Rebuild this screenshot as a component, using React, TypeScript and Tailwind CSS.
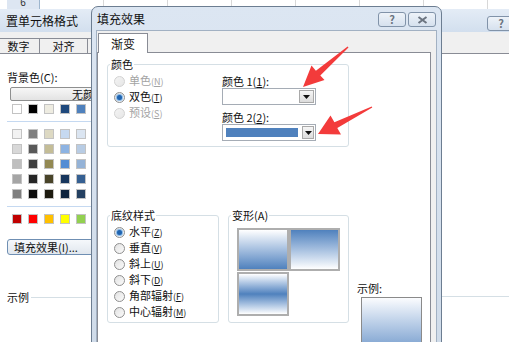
import React from "react";

function Radio({ checked = false, disabled = false }: { checked?: boolean; disabled?: boolean }) {
  return (
    <span
      className={
        "flex h-[11px] w-[11px] shrink-0 items-center justify-center rounded-full border " +
        (disabled
          ? "border-[#d2d2d2] bg-linear-to-br from-[#f4f4f4] to-[#e6e6e6]"
          : "border-[#8f8f8f] bg-linear-to-br from-[#e2e2e2] to-[#fbfbfb]")
      }
    >
      {checked && <span className="h-[5px] w-[5px] rounded-full bg-[#1f64b0] shadow-[0_0_1px_1px_#7fb3e6]" />}
    </span>
  );
}

function RadioItem({
  label,
  hot,
  checked,
  disabled,
}: {
  label: string;
  hot: string;
  checked?: boolean;
  disabled?: boolean;
}) {
  return (
    <div className={"flex h-[16px] items-center gap-[4px] " + (disabled ? "text-[#a3a3a3]" : "text-[#111]")}>
      <Radio checked={checked} disabled={disabled} />
      <span>
        {label}
        <span className="text-[9px]">
          (<span className="underline">{hot}</span>)
        </span>
      </span>
    </div>
  );
}

function Group({ title, className, children }: { title: string; className: string; children: React.ReactNode }) {
  return (
    <div className={"relative shrink-0 rounded-[3px] border border-[#d5dfe5] " + className}>
      <span className="absolute left-[2px] top-[-7px] bg-white px-[1px] leading-[12px]">{title}</span>
      {children}
    </div>
  );
}

function Dropdown({ fill }: { fill?: boolean }) {
  return (
    <div className="flex h-[17px] w-[94px] border border-[#a5acb5] bg-white">
      <div className="flex-1 p-[3px]">{fill && <div className="h-full w-[72px] bg-[#4f81bd]" />}</div>
      <div className="m-px flex w-[15px] items-center justify-center border border-[#a9a9a9] bg-linear-to-b from-[#f6f6f6] to-[#dcdcdc]">
        <svg width="7" height="4" viewBox="0 0 7 4">
          <path d="M0 0h7L3.5 4z" fill="#111" />
        </svg>
      </div>
    </div>
  );
}

function TitleButton({ kind }: { kind: "help" | "close" }) {
  return (
    <div className="flex h-[15px] w-[28px] items-center justify-center rounded-[3px] border border-[#8193a9] bg-linear-to-b from-[#eef3f9] to-[#d6e1ee]">
      {kind === "help" ? (
        <span className="text-[11px] font-bold leading-none text-[#6b7480]">?</span>
      ) : (
        <svg width="11" height="8" viewBox="0 0 11 8">
          <path d="M1.5 1l8 6M9.5 1l-8 6" stroke="#6b7480" strokeWidth="2" />
        </svg>
      )}
    </div>
  );
}

const SWATCHES_TOP = ["#ffffff", "#000000", "#eeece1", "#1f497d", "#4f81bd"];
const SWATCHES = [
  ["#f2f2f2", "#7f7f7f", "#ddd9c3", "#c6d9f0", "#dbe5f1"],
  ["#d8d8d8", "#595959", "#c4bd97", "#8db3e2", "#b8cce4"],
  ["#bfbfbf", "#3f3f3f", "#938953", "#548dd4", "#95b3d7"],
  ["#a5a5a5", "#262626", "#494429", "#17365d", "#366092"],
  ["#7f7f7f", "#0c0c0c", "#1d1b10", "#0f243e", "#244061"],
];
const SWATCHES_STD = ["#c00000", "#ff0000", "#ffc000", "#ffff00", "#92d050"];

function Swatch({ color }: { color: string }) {
  return <div className="h-[10px] w-[10px] border border-[#c3c3c3]" style={{ backgroundColor: color }} />;
}

export default function App() {
  return (
    <div className="relative h-[342px] w-[509px] overflow-hidden bg-white font-['Noto_Sans_CJK_SC','Noto_Sans',sans-serif] text-[11px] leading-[12px] text-[#111]">
      {/* sheet behind */}
      <div className="flex h-[9px] overflow-hidden">
        <div className="w-[7px]" />
        <div className="w-[33px] border-r border-[#9eb6ce] bg-[#dde6f2] text-center text-[10px] leading-[10px] text-[#333]">
          <div className="mt-[-3px]">6</div>
        </div>
        {[0, 1, 2, 3, 4, 5, 6].map((i) => (
          <div key={i} className="w-[64px] shrink-0 border-r border-[#d8d8d8]" />
        ))}
      </div>

      {/* format cells dialog */}
      <div className="absolute bottom-0 left-0 right-0 top-[9px] flex flex-col bg-[#f0f0f0]">
        <div className="flex h-[23px] shrink-0 items-center justify-between bg-linear-to-b from-[#e4ecf6] to-[#d2dfee] pl-[6px]">
          <span className="text-[12px]">置单元格格式</span>
          <div className="mr-[-6px] mt-[5px] flex h-[15px] w-[28px] items-center justify-center rounded-[3px] border border-[#8193a9] bg-linear-to-b from-[#eef3f9] to-[#d6e1ee]">
            <span className="text-[11px] font-bold leading-none text-[#6b7480]">?</span>
          </div>
        </div>
        <div className="flex h-[21px] shrink-0 items-end">
          <div className="ml-[-3px] flex h-[15px] w-[43px] items-center justify-center border border-b-0 border-[#898c95]">数字</div>
          <div className="flex h-[15px] w-[48px] items-center justify-center border border-b-0 border-l-0 border-[#898c95]">对齐</div>
          <div className="h-[15px] w-[50px] border border-b-0 border-l-0 border-[#898c95]" />
        </div>
        <div className="flex min-h-0 flex-1 border-t border-[#898c95] bg-white">
          <div className="w-[91px] shrink-0 pl-[7px]">
            <div className="mt-[17px]">背景色(C):</div>
            <div className="ml-[3px] mt-[4px] flex h-[14px] w-[157px] items-center justify-center rounded-[2px] border border-[#8e8f8f] bg-linear-to-b from-[#f7f7f7] to-[#e3e3e3]">
              无颜色
            </div>
            <div className="ml-[5px] mt-[3px] flex gap-[6px]">
              {SWATCHES_TOP.map((c) => (
                <Swatch key={c} color={c} />
              ))}
            </div>
            <div className="mt-[7px] h-px w-[84px] bg-[#c5d9f1]" />
            <div className="ml-[5px] mt-[7px] flex flex-col gap-[5px]">
              {SWATCHES.map((row, i) => (
                <div key={i} className="flex gap-[6px]">
                  {row.map((c, j) => (
                    <Swatch key={j} color={c} />
                  ))}
                </div>
              ))}
            </div>
            <div className="mt-[7px] h-px w-[84px] bg-[#c5d9f1]" />
            <div className="ml-[5px] mt-[7px] flex gap-[6px]">
              {SWATCHES_STD.map((c) => (
                <Swatch key={c} color={c} />
              ))}
            </div>
            <div className="mt-[15px] flex h-[16px] w-[120px] items-center rounded-[3px] border border-[#6f8fb3] bg-linear-to-b from-[#f5f8fb] to-[#e1e7ee] pl-[6px]">
              填充效果(I)...
            </div>
            <div className="mt-[36px] flex items-center gap-[2px]">
              <span>示例</span>
              <div className="h-px flex-1 bg-[#d5dfe5]" />
            </div>
          </div>
          <div className="w-[350px] shrink-0" />
          <div className="flex-1">
            <div className="mt-[242px] h-px bg-[#d5dfe5]" />
          </div>
        </div>
      </div>

      {/* fill effects dialog */}
      <div className="absolute bottom-[-20px] left-[91px] top-[6px] flex w-[351px] flex-col rounded-t-[7px] border border-[#6c7d91] bg-linear-to-b from-[#dce6f2] to-[#cfdbe9] px-[4px]">
        <div className="flex h-[23px] shrink-0 items-center justify-between">
          <span className="pl-[1px] text-[12px]">填充效果</span>
          <div className="mr-[1px] mt-[2px] flex gap-[2px]">
            <TitleButton kind="help" />
            <TitleButton kind="close" />
          </div>
        </div>
        <div className="flex min-h-0 flex-1 flex-col border border-[#a2b1c3] bg-[#f0f0f0]">
          <div className="flex shrink-0 pt-[2px]">
            <div className="relative z-10 mb-[-1px] ml-[1px] flex h-[20px] w-[50px] items-center justify-center border border-b-0 border-[#898c95] bg-white text-[12px]">
              渐变
            </div>
          </div>
          <div className="flex min-h-0 w-[334px] flex-1 flex-col overflow-hidden border border-[#898c95] bg-white pl-[9px] pt-[11px]">
            <Group title="颜色" className="flex h-[83px] w-[242px]">
              <div className="w-[114px] pl-[6px] pt-[8px]">
                <RadioItem label="单色" hot="N" disabled />
                <RadioItem label="双色" hot="T" checked />
                <RadioItem label="预设" hot="S" disabled />
              </div>
              <div className="pt-[10px]">
                <div>颜色 1(<span className="underline">1</span>):</div>
                <div className="mt-px">
                  <Dropdown />
                </div>
                <div className="mt-[6px]">颜色 2(<span className="underline">2</span>):</div>
                <div className="mt-px">
                  <Dropdown fill />
                </div>
              </div>
            </Group>
            <div className="mt-[68px] flex shrink-0">
              <Group title="底纹样式" className="h-[108px] w-[112px] pl-[6px] pt-[8px]">
                <RadioItem label="水平" hot="Z" checked />
                <RadioItem label="垂直" hot="V" />
                <RadioItem label="斜上" hot="U" />
                <RadioItem label="斜下" hot="D" />
                <RadioItem label="角部辐射" hot="F" />
                <RadioItem label="中心辐射" hot="M" />
              </Group>
              <Group title="变形(A)" className="ml-[9px] h-[108px] w-[121px] pl-[8px] pt-[12px]">
                <div className="grid grid-cols-[52px_51px] gap-y-[1px]">
                  <div className="h-[43px] border-2 border-[#aeaeae] bg-linear-to-b from-white to-[#4f81bd]" />
                  <div className="h-[43px] border-2 border-[#aeaeae] bg-linear-to-b from-[#4f81bd] to-white" />
                  <div className="h-[44px] border-2 border-[#aeaeae] bg-linear-to-b from-white via-[#4f81bd] to-white" />
                </div>
              </Group>
              <div className="ml-[8px]">
                <div className="mt-[67px]">示例:</div>
                <div className="ml-[4px] mt-[3px] h-[70px] w-[61px] border border-[#8a8a8a] bg-linear-to-b from-[#fbfcfe] to-[#4f81bd]" />
              </div>
            </div>
          </div>
        </div>
      </div>

      {/* annotation arrows */}
      <svg className="pointer-events-none absolute left-0 top-0" width="509" height="342" viewBox="0 0 509 342">
        <polygon
          points="303,87 324.5,80 320.3,75.4 348.5,47.6 347.6,46.4 315.9,70.8 311.5,65.5"
          fill="#f33b3b"
        />
        <polygon
          points="318,134 341,134.5 337.3,128 372.3,107.6 371.7,106.4 334.4,122.2 330.5,115.5"
          fill="#f33b3b"
        />
      </svg>
    </div>
  );
}
